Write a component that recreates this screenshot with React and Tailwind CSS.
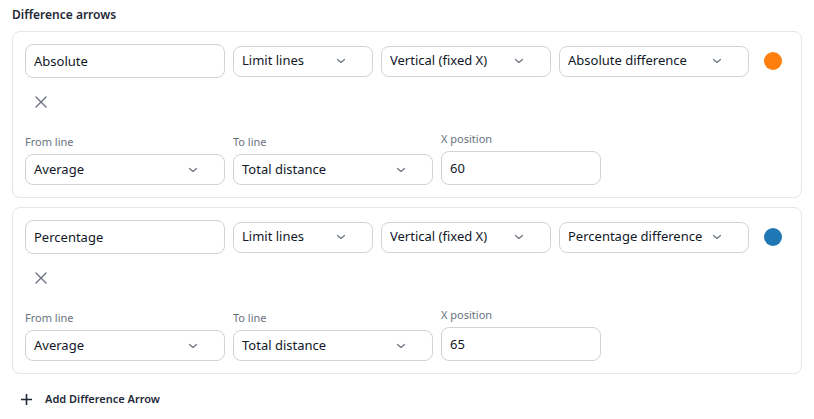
import React, { useState } from 'react';

const Chevron = () => (
    <svg width="10" height="6" viewBox="0 0 10 6" fill="none" className="shrink-0">
        <path d="M1.5 1.5 L5 4.5 L8.5 1.5" stroke="#6b7280" strokeWidth="1.2" strokeLinecap="round" strokeLinejoin="round" />
    </svg>
);

const FakeSelect = ({ value, width }) => (
    <div className={`${width} h-[31px] flex items-center justify-between pl-2 pr-[26px] border border-[#cfd3d8] rounded-lg bg-white text-[13px] text-[#111827]`}>
        <span className="truncate">{value}</span>
        <Chevron />
    </div>
);

const TextBox = ({ value, width }) => (
    <input
        defaultValue={value}
        className={`${width} h-[34px] px-2 border border-[#cfd3d8] rounded-lg bg-white text-[13px] text-[#111827] outline-none`}
    />
);

const ArrowCard = ({ arrow }) => (
    <div className="border border-[#e3e6ec] rounded-lg p-3">
        <div className="flex flex-wrap items-center gap-2">
            <TextBox value={arrow.label} width="w-[200px]" />
            <FakeSelect value="Limit lines" width="w-[140px]" />
            <FakeSelect value="Vertical (fixed X)" width="w-[170px]" />
            <FakeSelect value={arrow.kind} width="w-[190px]" />
            <button className="w-8 h-8 flex items-center justify-center">
                <span className={`w-[18px] h-[18px] rounded-full ${arrow.color}`} />
            </button>
            <button className="w-8 h-8 flex items-center justify-center">
                <svg width="14" height="14" viewBox="0 0 14 14" fill="none">
                    <path d="M2 2 L12 12 M12 2 L2 12" stroke="#6b7280" strokeWidth="1.4" strokeLinecap="round" />
                </svg>
            </button>
        </div>
        <div className="flex items-end gap-2 mt-[13px]">
            <div>
                <div className="text-[11px] leading-4 mb-1 text-[#6b7280]">From line</div>
                <FakeSelect value="Average" width="w-[200px]" />
            </div>
            <div>
                <div className="text-[11px] leading-4 mb-1 text-[#6b7280]">To line</div>
                <FakeSelect value="Total distance" width="w-[200px]" />
            </div>
            <div>
                <div className="text-[11px] leading-4 mb-1 text-[#6b7280]">X position</div>
                <TextBox value={arrow.x} width="w-[160px]" />
            </div>
        </div>
    </div>
);

const App = () => {
    const [arrows] = useState([
        { id: 1, label: 'Absolute', kind: 'Absolute difference', color: 'bg-[#ff7f0e]', x: '60' },
        { id: 2, label: 'Percentage', kind: 'Percentage difference', color: 'bg-[#1f77b4]', x: '65' },
    ]);

    return (
        <div className="bg-white min-h-screen px-3 pt-[5px]" style={{ fontFamily: '"Noto Sans", sans-serif' }}>
            <h3 className="text-[12px] font-semibold text-[#1f2937] leading-5 mb-[6px]">Difference arrows</h3>
            <div className="flex flex-col gap-[9px]">
                {arrows.map((a) => (
                    <ArrowCard key={a.id} arrow={a} />
                ))}
            </div>
            <button className="flex items-center gap-3 px-2 mt-[17px] text-[11px] font-semibold text-[#1f2937]">
                <svg width="13" height="13" viewBox="0 0 13 13" fill="none">
                    <path d="M6.5 1 V12 M1 6.5 H12" stroke="#1f2937" strokeWidth="1.6" />
                </svg>
                Add Difference Arrow
            </button>
        </div>
    );
};

export default App;
